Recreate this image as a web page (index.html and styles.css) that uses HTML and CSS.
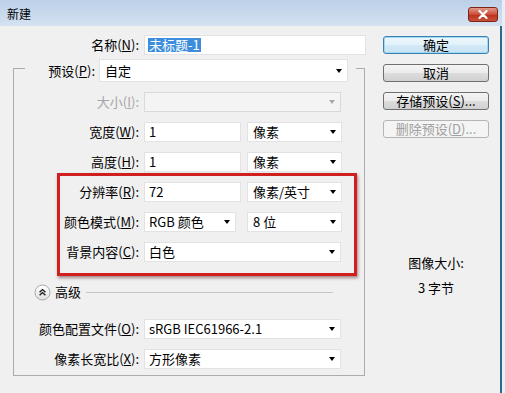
FILE: index.html
```html
<!DOCTYPE html>
<html lang="zh-CN">
<head>
  <meta charset="UTF-8" />
  <title>新建</title>
  <link rel="stylesheet" href="styles.css">
</head>

<body>
  <div class="window">
    <div class="titlebar">
      <span class="title">新建</span>
      <button class="close-btn" aria-label="关闭">
        <svg width="12" height="9" viewBox="0 0 12 9"><path d="M2.5 1 L9.5 8 M9.5 1 L2.5 8" stroke="#fff" stroke-width="2.2" stroke-linecap="round"/></svg>
      </button>
    </div>

    <div class="dialog">
      <div class="form-col">
        <div class="row name-row">
          <label class="lbl">名称(<u>N</u>):</label>
          <div class="field name-field"><span class="selected">未标题-1</span></div>
        </div>

        <fieldset class="group">
          <legend class="preset">
            <label class="lbl">预设(<u>P</u>):</label>
            <div class="field select preset-select">自定<i class="arrow"></i></div>
          </legend>

          <div class="row disabled">
            <label class="lbl">大小(<u>I</u>):</label>
            <div class="field select full"><i class="arrow"></i></div>
          </div>

          <div class="row">
            <label class="lbl">宽度(<u>W</u>):</label>
            <div class="field num">1</div>
            <div class="field select unit">像素<i class="arrow"></i></div>
          </div>

          <div class="row">
            <label class="lbl">高度(<u>H</u>):</label>
            <div class="field num">1</div>
            <div class="field select unit">像素<i class="arrow"></i></div>
          </div>

          <div class="highlight">
            <div class="row">
              <label class="lbl">分辨率(<u>R</u>):</label>
              <div class="field num">72</div>
              <div class="field select unit">像素/英寸<i class="arrow"></i></div>
            </div>
            <div class="row">
              <label class="lbl">颜色模式(<u>M</u>):</label>
              <div class="field select mode">RGB 颜色<i class="arrow"></i></div>
              <div class="field select unit">8 位<i class="arrow"></i></div>
            </div>
            <div class="row">
              <label class="lbl">背景内容(<u>C</u>):</label>
              <div class="field select full">白色<i class="arrow"></i></div>
            </div>
          </div>

          <div class="advanced">
            <svg class="toggle" width="17" height="17" viewBox="0 0 17 17">
              <defs>
                <linearGradient id="tg" x1="0" y1="0" x2="0" y2="1">
                  <stop offset="0" stop-color="#ffffff"/>
                  <stop offset="1" stop-color="#e0e0e0"/>
                </linearGradient>
              </defs>
              <circle cx="8.5" cy="8.5" r="7.5" fill="url(#tg)" stroke="#a8a8a8"/>
              <path d="M5.6 8.2 L8.5 5.6 L11.4 8.2 M5.6 11.2 L8.5 8.6 L11.4 11.2" fill="none" stroke="#1a1a1a" stroke-width="1.4"/>
            </svg>
            <span>高级</span>
            <div class="rule"></div>
          </div>

          <div class="row profile">
            <label class="lbl">颜色配置文件(<u>O</u>):</label>
            <div class="field select full">sRGB IEC61966-2.1<i class="arrow"></i></div>
          </div>

          <div class="row">
            <label class="lbl">像素长宽比(<u>X</u>):</label>
            <div class="field select full">方形像素<i class="arrow"></i></div>
          </div>
        </fieldset>
      </div>

      <div class="side-col">
        <button class="btn default">确定</button>
        <button class="btn">取消</button>
        <button class="btn">存储预设(<u>S</u>)...</button>
        <button class="btn" disabled>删除预设(<u>D</u>)...</button>

        <div class="image-size">
          <div>图像大小:</div>
          <div class="size-value">3 字节</div>
        </div>
      </div>
    </div>
  </div>
</body>
</html>
```

FILE: styles.css
```css
* {
  box-sizing: border-box;
}

body {
  margin: 0;
  font-family: "Noto Sans CJK SC", "Noto Sans", sans-serif;
  font-size: 13px;
  line-height: 16px;
  color: #000;
  background: #f0f0f0;
}

.window {
  width: 505px;
  height: 393px;
  background: #f0f0f0;
  border-right: 3px solid #e6eef7;
  box-shadow: inset -2px 0 0 #2e6a8a;
  overflow: hidden;
}

.titlebar {
  height: 26px;
  display: flex;
  align-items: flex-start;
  justify-content: space-between;
  padding: 0 4px 0 7px;
  background: linear-gradient(#bcd0e8, #d4e2f1);
}

.title {
  margin-top: 6px;
  font-size: 12px;
}

.close-btn {
  width: 30px;
  height: 15px;
  margin-top: 7px;
  padding: 0;
  display: flex;
  align-items: center;
  justify-content: center;
  border: 1px solid #7d2418;
  border-radius: 3px;
  background: linear-gradient(#e19a8c, #cc4c36 50%, #b9301c 51%, #c9503a);
}

.dialog {
  display: flex;
  padding-top: 9px;
}

.form-col {
  width: 366px;
}

/* rows: label right-aligned, then fields */
.row {
  display: flex;
  align-items: center;
  gap: 5px;
  height: 20px;
}

.lbl {
  flex: none;
  width: var(--lbl-w);
  text-align: right;
  white-space: nowrap;
}

.name-row {
  --lbl-w: 139px;
}

.field {
  flex: none;
  height: 20px;
  display: flex;
  align-items: center;
  padding-left: 4px;
  background: #fff;
  border: 1px solid #e2e2e2;
  white-space: nowrap;
}

.name-field {
  width: 222px;
  padding-left: 3px;
}

.selected {
  background: #3d8ddc;
  color: #fff;
  line-height: 14px;
  padding: 0 1px;
}

.arrow {
  margin-left: auto;
  margin-right: 5px;
  width: 0;
  height: 0;
  border-top: 4px solid #000;
  border-left: 3.5px solid transparent;
  border-right: 3.5px solid transparent;
}

.num {
  width: 97px;
}

.unit {
  width: 95px;
  margin-left: 1px;
  padding-left: 5px;
}

.mode {
  width: 92px;
  margin-right: 5px;
}

.full {
  width: 197px;
}

.disabled .lbl {
  color: #a6a6a6;
}

.disabled .field {
  background: #f4f4f4;
  border-color: #d9d9d9;
}

.disabled .arrow {
  border-top-color: #a8a8a8;
}

/* group box */
.group {
  --lbl-w: 125px;
  margin: 0 0 0 13px;
  width: 352px;
  padding: 0 0 6px;
  border: 1px solid #acacac;
}

.group > .row {
  margin-top: 10px;
}

.preset {
  --lbl-w: 70px;
  margin-left: 11px;
  padding: 4px 8px 0 0;
  display: flex;
  align-items: center;
  gap: 4px;
}

.preset-select {
  width: 249px;
  height: 23px;
  padding-left: 5px;
}

.highlight {
  --lbl-w: 79px;
  margin: 1px 0 0 43px;
  width: 300px;
  padding: 6px 0 11px;
  display: flex;
  flex-direction: column;
  gap: 10px;
  border: 3px solid #d01f1f;
  box-shadow: 1px 2px 3px rgba(70, 0, 0, 0.45);
}

.advanced {
  display: flex;
  align-items: center;
  height: 16px;
  margin-top: 8px;
  padding: 0 31px 0 20px;
}

.toggle {
  flex: none;
}

.advanced span {
  margin-left: 4px;
}

.rule {
  flex: 1;
  height: 1px;
  margin-left: 5px;
  background: #c6c6c6;
}

.group > .profile {
  margin-top: 19px;
}

/* right column */
.side-col {
  width: 106px;
  margin-left: 17px;
  padding-top: 1px;
  display: flex;
  flex-direction: column;
  gap: 10px;
}

.btn {
  height: 18px;
  padding: 0;
  font: inherit;
  line-height: 16px;
  color: #000;
  border: 1px solid #707070;
  border-radius: 3px;
  background: linear-gradient(#f4f4f4, #ebebeb 50%, #dddddd 51%, #d0d0d0);
}

.btn.default {
  border-color: #3c7fb1;
  box-shadow: inset 0 0 0 1px #9fdaf5;
  background: linear-gradient(#eef7fc, #e2f1fa 50%, #d3e9f6 51%, #c8e3f3);
}

.btn:disabled {
  color: #a0a0a0;
  border-color: #b5b5b5;
  background: #f4f4f4;
}

.image-size {
  margin-top: 107px;
  text-align: center;
}

.size-value {
  margin-top: 9px;
}
```
